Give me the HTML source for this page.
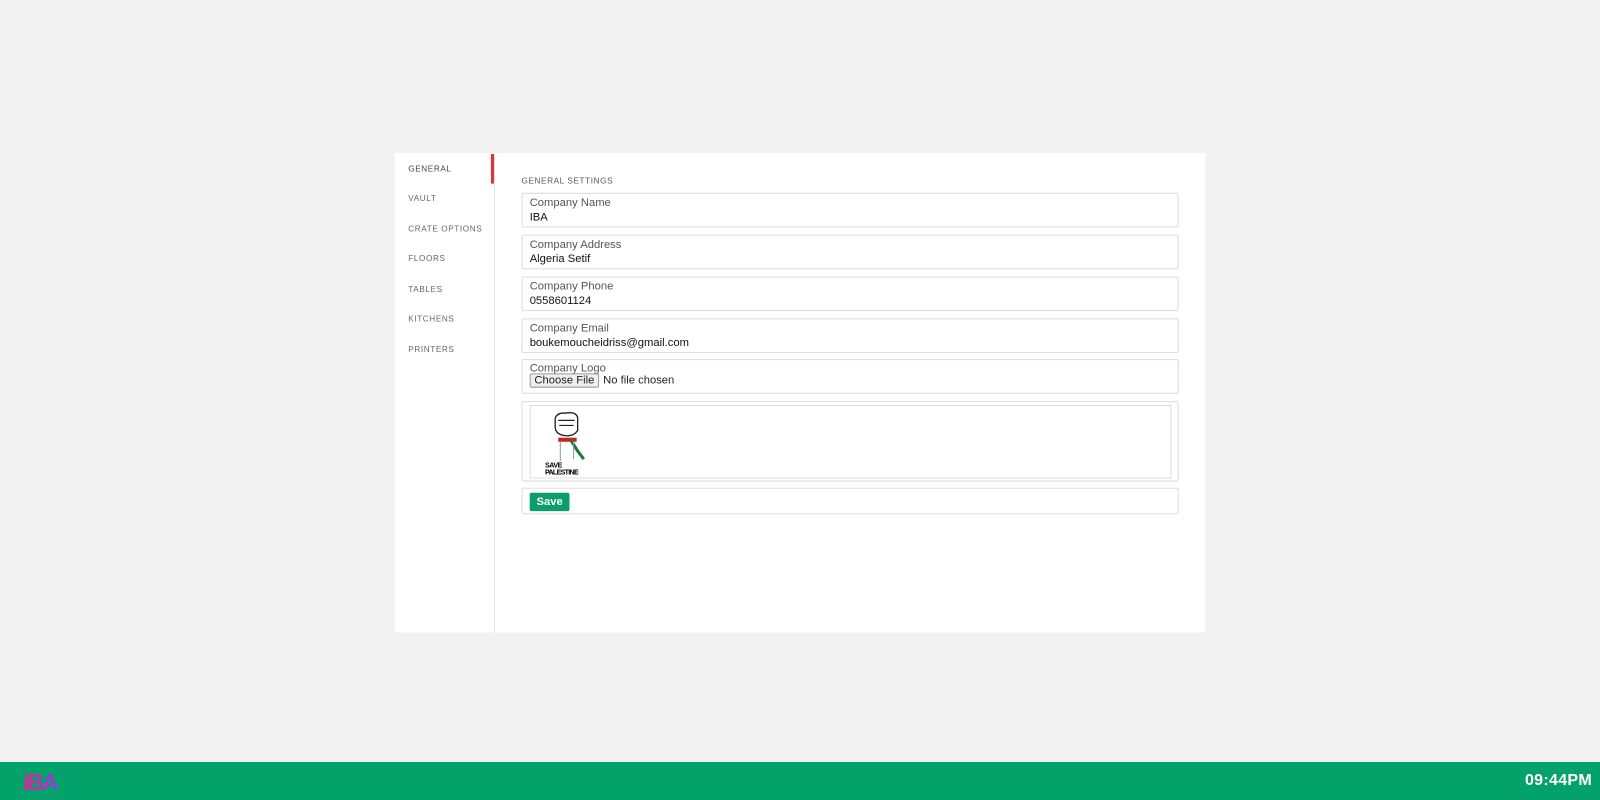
<!DOCTYPE html>
<html><head><style>
*{margin:0;padding:0;box-sizing:border-box}
body{width:1600px;height:800px;background:#f2f2f2;font-family:"Liberation Sans",sans-serif;position:relative;overflow:hidden}
.card{position:absolute;left:395px;top:153px;width:794px;height:470px;background:#fff;transform:scale(1.0204);transform-origin:0 0}
.side{position:absolute;left:0;top:0;width:98px;height:470px;border-right:1px solid #e3e3e3}
.tab{position:absolute;left:13px;font-size:8px;letter-spacing:0.6px;color:#666}
.act{position:absolute;left:0;top:1px;width:97px;height:29px;border-right:3px solid #d9343a;background:#fff}
.field{position:absolute;left:124px;width:644px;border:1px solid #ddd;border-radius:2px;font-size:11px;color:#222}
.lbl{position:absolute;left:7px;top:3px;color:#555}
.val{position:absolute;left:7px;top:17px;color:#111}
.foot{position:absolute;left:0;top:762px;width:1600px;height:38px;background:#03a26a}
</style></head><body>
<div class="card">
 <div class="side">
  <div class="act"></div>
  <div class="tab" style="top:11px;color:#444">GENERAL</div>
  <div class="tab" style="top:40px">VAULT</div>
  <div class="tab" style="top:70px">CRATE OPTIONS</div>
  <div class="tab" style="top:99px">FLOORS</div>
  <div class="tab" style="top:129px">TABLES</div>
  <div class="tab" style="top:158px">KITCHENS</div>
  <div class="tab" style="top:188px">PRINTERS</div>
 </div>
 <div style="position:absolute;left:124px;top:23px;font-size:8px;letter-spacing:0.6px;color:#555">GENERAL SETTINGS</div>
 <div class="field" style="top:39px;height:34px"><div class="lbl">Company Name</div><div class="val">IBA</div></div>
 <div class="field" style="top:80px;height:34px"><div class="lbl">Company Address</div><div class="val">Algeria Setif</div></div>
 <div class="field" style="top:121px;height:34px"><div class="lbl">Company Phone</div><div class="val">0558601124</div></div>
 <div class="field" style="top:162px;height:34px"><div class="lbl">Company Email</div><div class="val">boukemoucheidriss@gmail.com</div></div>
 <div class="field" style="top:202px;height:34px"><div class="lbl" style="top:2px">Company Logo</div>
  <div style="position:absolute;left:7px;top:13px;width:68px;height:14px;background:#efefef;border:1px solid #999;border-radius:2px;font-size:11px;text-align:center;line-height:12px">Choose File</div>
  <div style="position:absolute;left:79px;top:14px">No file chosen</div></div>
 <div class="field" style="top:243px;height:79px">
  <div style="position:absolute;left:7px;top:3px;width:629px;height:72px;border:1px solid #ddd">
   <svg width="60" height="70" viewBox="0 0 60 70" style="position:absolute;left:12px;top:2px">
    <path d="M12 10 Q14 4 22 5 Q32 3 34 9 L34 22 Q30 28 22 27 Q12 26 12 18Z" fill="#fff" stroke="#222" stroke-width="1.3"/>
    <path d="M15 12 L31 12 M16 17 L30 17" stroke="#222" stroke-width="1.2"/>
    <rect x="15" y="29" width="18" height="4" fill="#c22"/>
    <path d="M27 31 L34 42 L40 50" stroke="#1a7a3a" stroke-width="3" fill="none"/>
    <path d="M17 33 L17 52 M30 33 L30 50" stroke="#999" stroke-width="1"/>
    <text x="2" y="58" font-size="7" font-weight="bold" font-family="Liberation Sans" letter-spacing="-0.5">SAVE</text>
    <text x="2" y="65" font-size="7" font-weight="bold" font-family="Liberation Sans" letter-spacing="-0.7">PALESTINE</text>
   </svg>
  </div></div>
 <div class="field" style="top:328px;height:26px">
  <div style="position:absolute;left:7px;top:4px;width:39px;height:18px;background:#0a9e6a;border-radius:2px;color:#fff;font-weight:bold;font-size:11px;text-align:center;line-height:18px">Save</div></div>
</div>
<div class="foot">
 <div style="position:absolute;left:23px;top:7px;font-size:23px;font-weight:bold;letter-spacing:-2px;background:linear-gradient(90deg,#e8208a,#8a40e8);-webkit-background-clip:text;color:transparent">iBA</div>
 <div style="position:absolute;right:8px;top:10px;font-size:16px;font-weight:bold;color:#fff;letter-spacing:0.3px">09:44PM</div>
</div>
</body></html>
